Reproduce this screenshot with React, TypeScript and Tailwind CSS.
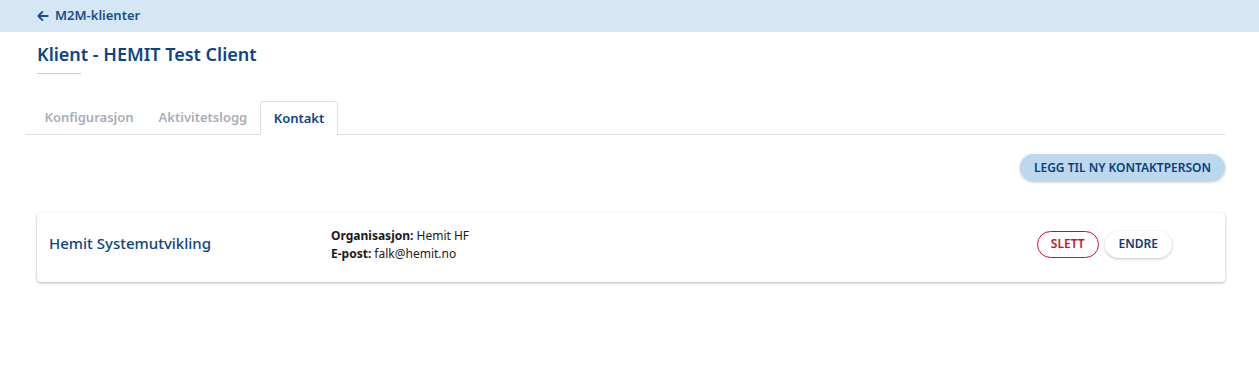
import React from 'react';

const tabs = ['Konfigurasjon', 'Aktivitetslogg', 'Kontakt'];

export default function App() {
    const active = 'Kontakt';

    return (
        <div className="min-h-screen bg-white text-[#0b3d7a]" style={{ fontFamily: '"Noto Sans", "Open Sans", sans-serif' }}>
            {/* Top bar */}
            <div className="h-8 bg-[#d5e7f5] flex items-center px-[36px]">
                <a href="#" className="flex items-center gap-[5px] text-[13px] font-semibold text-[#1b4d8c]">
                    <svg width="14" height="14" viewBox="0 0 24 24" fill="none" stroke="currentColor" strokeWidth="3.2" strokeLinecap="round" strokeLinejoin="round">
                        <path d="M20 12H5" />
                        <path d="M11 5l-7 7 7 7" />
                    </svg>
                    M2M-klienter
                </a>
            </div>

            <div className="pl-[25px] pr-[34px]">
                {/* Title */}
                <div className="px-3 pt-[10px]">
                    <h1 className="text-[18px] font-semibold leading-6 text-[#0b4586]">Klient - HEMIT Test Client</h1>
                    <div className="mt-[7px] w-[44px] h-px bg-[#c9ced6]" />
                </div>

                {/* Tabs */}
                <div className="mt-[27px] flex pl-[7px] border-b border-[#dde1e6] h-[34px]">
                    {tabs.map((t) => (
                        <div
                            key={t}
                            className={
                                t === active
                                    ? 'px-[13px] -mb-px flex items-center rounded-t-[4px] border border-b-0 border-[#dde1e6] bg-white text-[13px] font-semibold text-[#0b4586]'
                                    : 'px-[12.5px] flex items-center text-[13px] font-semibold text-[#a8aeb8]'
                            }
                        >
                            {t}
                        </div>
                    ))}
                </div>

                {/* Action */}
                <div className="flex justify-end mt-[19px]">
                    <button className="h-[27px] px-[14px] rounded-full bg-[#bcd8ee] text-[12px] font-semibold text-[#0b3d7a] shadow-[0_1px_3px_rgba(0,0,0,0.25)]">
                        LEGG TIL NY KONTAKTPERSON
                    </button>
                </div>

                {/* Contact card */}
                <div className="ml-3 mt-[32px] h-[69px] rounded-[4px] bg-white shadow-[0_1px_3px_rgba(0,0,0,0.3)] flex items-center px-3 pb-[9px]">
                    <div className="w-[282px] text-[15px] font-medium text-[#0b4586]">Hemit Systemutvikling</div>
                    <div className="text-[12px] leading-[18px] text-[#1a1a1a] pt-[3px]">
                        <div><span className="font-bold">Organisasjon:</span> Hemit HF</div>
                        <div><span className="font-bold">E-post:</span> falk@hemit.no</div>
                    </div>
                    <div className="ml-auto mr-[41px] flex gap-[6px] pt-[2px]">
                        <button className="h-[27px] px-[13px] rounded-full border border-[#c8102e] text-[12px] font-semibold text-[#c8102e] bg-white">
                            SLETT
                        </button>
                        <button className="h-[27px] px-[14px] rounded-full bg-white text-[12px] font-semibold text-[#0b3d7a] shadow-[0_1px_3px_rgba(0,0,0,0.25)]">
                            ENDRE
                        </button>
                    </div>
                </div>
            </div>
        </div>
    );
}
